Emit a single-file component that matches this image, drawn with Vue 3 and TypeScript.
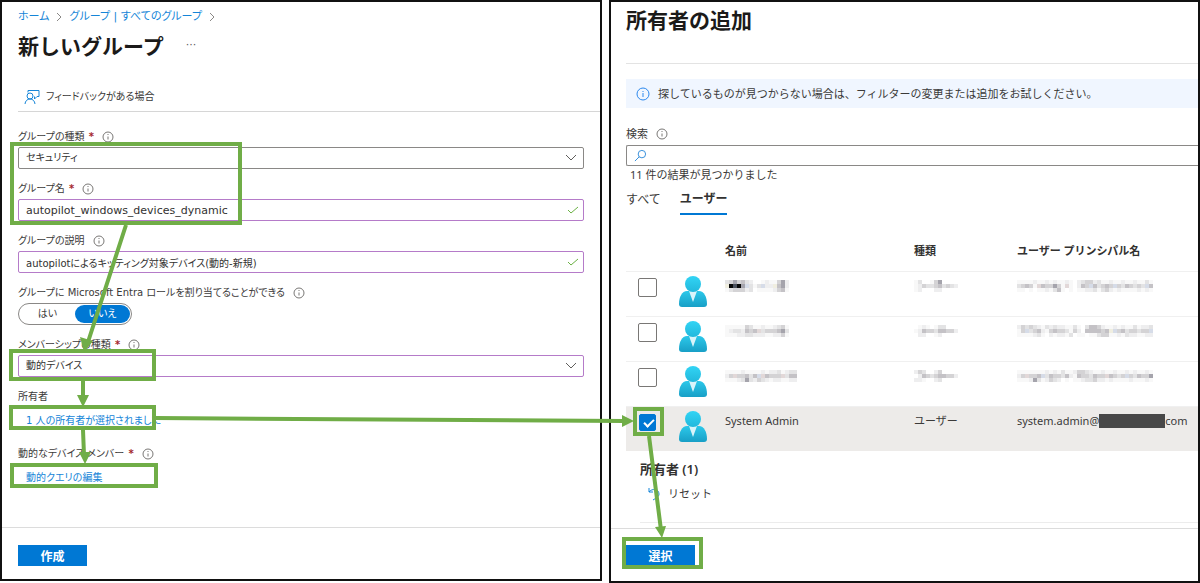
<script setup lang="ts">
interface Mosaic { width: number; rows: string[] }
interface Person { id: string; name: Mosaic; kind: Mosaic; upn: Mosaic }

const shades: Record<string, string> = {
  a: '#f8f8f8', b: '#eeeeef', c: '#e3e3e4', d: '#d4d3d5', e: '#c4c2c6', f: '#a5a4ac', k: '#080808', g: '#4a505c',
  y: '#f0eee0', p: '#e2d8d8', s: '#d6dce8',
}

const cells = (m: Mosaic) =>
  m.rows.flatMap((row, y) =>
    row.split('').map((c, x) => ({ key: `${x}-${y}`, x: x * 4, y: y * 4, fill: shades[c] ?? 'none' })),
  ).filter((c) => c.fill !== 'none')

const people: Person[] = [
  {
    id: 'p1',
    name: { width: 64, rows: ['cdfdecb..abaadfb', 'ykgkfscacsbbyefb', 'acdddbc.aaaabdea'] },
    kind: { width: 48, rows: ['ac..adf.....', 'abdccdecdcb.', 'ab...bb.....'] },
    upn: { width: 140, rows: ['aaaabaababaaba.bcddbcaabaabaabaaca.', 'cdedapeddfdapa.bedsecdedsdcedcdcse.', 'aa.a.aabacea.a.aabbcacdbabaaaababa.'] },
  },
  {
    id: 'p2',
    name: { width: 64, rows: ['aaaaadcaabaabcda', 'abccbedepcdddefc', 'aaabbccbbbaabbda'] },
    kind: { width: 48, rows: ['.aba.acc....', 'abeddceeddb.', '.bb..ab.....'] },
    upn: { width: 140, rows: ['bdcdcbacbcbbaaca.ceedbaababaacabbc.', 'adscdebadeddcadb.eeeedeysdecddcdds.', 'aaaabca.babbac.aa.aacddaabacbbaabb.'] },
  },
  {
    id: 'p3',
    name: { width: 72, rows: ['aaaabaaaababbcabcc', 'bdpddecespedddpcee', 'aaabcfcbdcbabbaabb'] },
    kind: { width: 48, rows: ['bdc..bd.....', '.bedcdeeddb.', 'bba..bc.....'] },
    upn: { width: 140, rows: ['aaaaaaababacaabddcbaabaabaababaaba.', 'bdpddesceddcebaeddceddpedcdsdceddf.', 'aaabfcabdcb.a.aabccdbbabaaaabaaaba.'] },
  },
]
</script>

<template>
  <main class="stage">
    <section class="panel group-panel">
      <div class="body">
        <nav class="crumbs">
          <a href="#">ホーム</a>
          <svg class="sep" viewBox="0 0 6 10"><path d="M1 1l4 4-4 4" /></svg>
          <a href="#">グループ | すべてのグループ</a>
          <svg class="sep" viewBox="0 0 6 10"><path d="M1 1l4 4-4 4" /></svg>
        </nav>
        <header class="title-row">
          <h1>新しいグループ</h1>
          <button class="more" aria-label="その他">···</button>
        </header>
        <button class="feedback">
          <svg viewBox="0 0 16 16"><path d="M4 3.500V1.500h11v6h-2L10.500 10V7.500" /><circle cx="6" cy="7" r="3" /><path d="M1 15c.3-3 2.200-5 5-5s4.700 2 5 5" /></svg>
          フィードバックがある場合
        </button>

        <div class="field">
          <label for="kind">グループの種類 <b>*</b><svg class="info" viewBox="0 0 12 12"><circle cx="6" cy="6" r="5" /><path d="M6 5.500v3M6 3v1" /></svg></label>
          <div class="control">
            <select id="kind"><option>セキュリティ</option></select>
            <svg class="chevron" viewBox="0 0 12 8"><path d="M1 1l5 5 5-5" /></svg>
          </div>
        </div>
        <div class="field">
          <label for="gname">グループ名 <b>*</b><svg class="info" viewBox="0 0 12 12"><circle cx="6" cy="6" r="5" /><path d="M6 5.500v3M6 3v1" /></svg></label>
          <div class="control edited">
            <input id="gname" class="latin" type="text" value="autopilot_windows_devices_dynamic" />
            <svg class="ok" viewBox="0 0 12 8"><path d="M1 4l3 3 7-6" /></svg>
          </div>
        </div>
        <div class="field">
          <label for="gdesc">グループの説明<svg class="info" viewBox="0 0 12 12"><circle cx="6" cy="6" r="5" /><path d="M6 5.500v3M6 3v1" /></svg></label>
          <div class="control edited">
            <input id="gdesc" type="text" value="autopilotによるキッティング対象デバイス(動的-新規)" />
            <svg class="ok" viewBox="0 0 12 8"><path d="M1 4l3 3 7-6" /></svg>
          </div>
        </div>
        <div class="field">
          <span class="label">グループに Microsoft Entra ロールを割り当てることができる<svg class="info" viewBox="0 0 12 12"><circle cx="6" cy="6" r="5" /><path d="M6 5.500v3M6 3v1" /></svg></span>
          <div class="toggle">
            <button>はい</button><button class="on">いいえ</button>
          </div>
        </div>
        <div class="field">
          <label for="member">メンバーシップの種類 <b>*</b><svg class="info" viewBox="0 0 12 12"><circle cx="6" cy="6" r="5" /><path d="M6 5.500v3M6 3v1" /></svg></label>
          <div class="control edited">
            <select id="member"><option>動的デバイス</option></select>
            <svg class="chevron" viewBox="0 0 12 8"><path d="M1 1l5 5 5-5" /></svg>
          </div>
        </div>
        <div class="field link-field">
          <span class="label">所有者</span>
          <a href="#">1 人の所有者が選択されました</a>
        </div>
        <div class="field link-field">
          <span class="label">動的なデバイス メンバー <b>*</b><svg class="info" viewBox="0 0 12 12"><circle cx="6" cy="6" r="5" /><path d="M6 5.500v3M6 3v1" /></svg></span>
          <a href="#">動的クエリの編集</a>
        </div>
      </div>
      <footer><button class="primary">作成</button></footer>
    </section>

    <section class="panel owner-panel">
      <div class="body">
        <h1>所有者の追加</h1>
        <div class="notice">
          <svg viewBox="0 0 14 14"><circle cx="7" cy="7" r="6" /><path d="M7 6v4M7 4v1" /></svg>
          探しているものが見つからない場合は、フィルターの変更または追加をお試しください。
        </div>
        <label class="search-label" for="search">検索<svg class="info" viewBox="0 0 12 12"><circle cx="6" cy="6" r="5" /><path d="M6 5.500v3M6 3v1" /></svg></label>
        <div class="search">
          <svg viewBox="0 0 14 14"><circle cx="8.500" cy="5.500" r="4" /><path d="M5.500 8.500L1 13" /></svg>
          <input id="search" type="text" />
        </div>
        <p class="count">11 件の結果が見つかりました</p>
        <div class="tabs">
          <button>すべて</button><button class="active">ユーザー</button>
        </div>
        <table>
          <colgroup><col class="c-check" /><col class="c-icon" /><col class="c-name" /><col class="c-kind" /><col /></colgroup>
          <thead>
            <tr><th></th><th></th><th>名前</th><th>種類</th><th>ユーザー プリンシパル名</th></tr>
          </thead>
          <tbody>
            <tr v-for="p in people" :key="p.id">
              <td><input type="checkbox" aria-label="選択" /></td>
              <td><svg class="person" viewBox="0 0 28 32"><path d="M0 28c0-7 3-13 8-13h12c5 0 8 6 8 13 0 2-1 3-3 3H3c-2 0-3-1-3-3z" fill="url(#torso)" /><path d="M10 15h8l-4 11z" fill="#d9f4fa" /><circle cx="14" cy="8" r="8" fill="url(#head)" /></svg></td>
              <td v-for="(m, i) in [p.name, p.kind, p.upn]" :key="i">
                <svg class="mosaic" :width="m.width" height="12" :viewBox="`0 0 ${m.width} 12`" shape-rendering="crispEdges">
                  <rect v-for="c in cells(m)" :key="c.key" :x="c.x" :y="c.y" width="4" height="4" :fill="c.fill" />
                </svg>
              </td>
            </tr>
            <tr class="chosen">
              <td><input type="checkbox" aria-label="System Admin" checked /></td>
              <td><svg class="person" viewBox="0 0 28 32"><path d="M0 28c0-7 3-13 8-13h12c5 0 8 6 8 13 0 2-1 3-3 3H3c-2 0-3-1-3-3z" fill="url(#torso)" /><path d="M10 15h8l-4 11z" fill="#d9f4fa" /><circle cx="14" cy="8" r="8" fill="url(#head)" /></svg></td>
              <td>System Admin</td>
              <td>ユーザー</td>
              <td><span class="upn">system.admin@<i class="redacted"></i>com</span></td>
            </tr>
          </tbody>
        </table>
        <div class="picked">
          <h2>所有者 (1)</h2>
          <button class="reset">
            <svg viewBox="0 0 12 14"><path d="M1 1v4h4M1 5c3-4 10-3 10 2 0 3-3 4-6 6" /></svg>リセット
          </button>
        </div>
      </div>
      <footer><button class="primary">選択</button></footer>
    </section>

    <svg class="marks" viewBox="0 0 1200 583" preserveAspectRatio="none">
      <defs>
        <linearGradient id="head" x1="0" y1="0" x2="0" y2="1"><stop offset="0" stop-color="#32d4f5" /><stop offset="1" stop-color="#22b8dc" /></linearGradient>
        <linearGradient id="torso" x1="0" y1="0" x2="0" y2="1"><stop offset="0" stop-color="#2cc8ea" /><stop offset="1" stop-color="#189fc6" /></linearGradient>
      </defs>
      <g class="boxes">
        <rect x="12" y="144" width="228" height="79" />
        <rect x="11" y="351" width="143" height="28" />
        <rect x="11" y="407" width="143" height="21" />
        <rect x="12" y="465" width="144" height="21" />
        <rect x="635" y="409" width="27" height="25" />
        <rect x="624" y="539" width="77" height="28" />
      </g>
      <g class="lines">
        <path d="M126 225L88 342M83 380v18M83 430l1 25M155 418l470 3M649 436l12 94" />
      </g>
      <g class="tips">
        <path d="M84 352l-4-15 13 4zM83 407l-6-12h12zM85 464l-6-12h12zM634 421l-12-6v12zM662 538l-7-11 11-1z" />
      </g>
    </svg>
  </main>
</template>

<style>
body { margin: 0; background: #fff; }
</style>

<style scoped>
* { box-sizing: border-box; }
.stage { position: relative; display: flex; align-items: flex-start; gap: 7px; min-height: 583px; color: #3b3a39; font: 12px/16px "Noto Sans CJK JP", sans-serif; }
.panel { border: 2px solid #111; display: flex; flex-direction: column; background: #fff; min-width: 0; }
.group-panel { flex: 602; min-height: 581px; font-family: "DejaVu Sans", "Noto Sans CJK JP", sans-serif; font-size: 10px; font-feature-settings: "palt"; }
.owner-panel { flex: 591; min-height: 583px; font-family: "Noto Sans", "Noto Sans CJK JP", sans-serif; font-size: 11px; }
.body { flex: 1; }
h1, h2, p { margin: 0; }
h1 { font: 700 21px/28px "Noto Sans CJK JP", sans-serif; color: #1b1a19; }
button { font: inherit; color: inherit; border: 0; background: none; padding: 0; }
a { color: #1585d8; text-decoration: none; }
svg { fill: none; flex: none; }
b { color: #a4262c; margin-left: 1px; }
.group-panel .body { padding: 6px 16px 0; }
.crumbs { display: flex; align-items: center; gap: 7px; height: 18px; font-size: 11px; }
.sep { width: 6px; height: 10px; stroke: #8a8886; }
.title-row { display: flex; align-items: center; gap: 22px; height: 38px; }
.more { color: #605e5c; font-size: 11px; }
.feedback { display: flex; align-items: center; gap: 6px; width: calc(100% + 16px); height: 30px; margin: 18px 0 15px; padding-left: 6px; border-bottom: 1px solid #d6d6d6; }
.feedback svg { width: 16px; height: 16px; stroke: #1585d8; }
.field { display: flex; flex-direction: column; margin-bottom: 10px; }
.field label, .label { display: flex; align-items: center; height: 20px; white-space: pre; }
.info { width: 12px; height: 12px; margin-left: 8px; stroke: #797775; }
.control { position: relative; display: flex; align-items: center; height: 22px; border: 1px solid #8a8886; border-radius: 2px; }
.edited { border-color: #b57bc9; }
.control input, .control select { flex: 1; width: 100%; height: 20px; border: 0; outline: 0; background: none; appearance: none; padding: 0 7px; font: inherit; font-feature-settings: inherit; color: #323130; }
.control .latin { font-size: 11px; }
.control svg { position: absolute; right: 6px; width: 12px; height: 8px; }
.control .ok { right: 4px; }
.chevron { stroke: #605e5c; }
.ok { stroke: #6bb144; }
.toggle { display: flex; width: 114px; height: 22px; padding: 1px; border: 1px solid #8a8886; border-radius: 11px; }
.toggle button { flex: 1; border-radius: 9px; }
.toggle .on { background: #0078d4; color: #fff; }
.link-field a { padding: 5px 8px 4px; line-height: 18px; }
footer { height: 53px; border-top: 1px solid #dcdcdc; padding: 16px 15px; }
.group-panel footer { height: 52px; padding: 17px 16px; }
.primary { display: block; width: 69px; height: 21px; background: #0078d4; color: #fff; font: 700 12px/20px "Noto Sans CJK JP", sans-serif; }
.owner-panel .body { padding: 3px 0 0 15px; }
.notice { position: relative; display: flex; align-items: center; gap: 8px; height: 29px; margin-top: 15px; padding-left: 10px; background: #f0f6ff; white-space: nowrap; }
.owner-panel h1 { padding-bottom: 30px; border-bottom: 1px solid #e3e3e3; }
.notice svg { width: 14px; height: 14px; stroke: #2b88ee; }
.search-label { display: flex; align-items: center; height: 18px; margin: 17px 0 2px; }
.search { display: flex; align-items: center; height: 21px; padding-left: 7px; border: 1px solid #8a8886; border-right: 0; border-radius: 2px 0 0 2px; }
.search svg { width: 13px; height: 13px; stroke: #2b88d8; }
.search input { flex: 1; border: 0; outline: 0; background: none; }
.count { padding-left: 4px; line-height: 18px; }
.tabs { display: flex; gap: 19px; height: 31px; font-size: 12px; }
.tabs .active { font-weight: 700; border-bottom: 2px solid #0078d4; color: #323130; }
table { width: 100%; table-layout: fixed; border-collapse: collapse; margin-top: 17px; }
.c-check { width: 53px; } .c-icon { width: 46px; } .c-name { width: 189px; } .c-kind { width: 103px; }
th { text-align: left; height: 39px; padding: 0; color: #323130; }
td { height: 45px; padding: 0; vertical-align: top; border-top: 1px solid #f0f0f0; line-height: 28px; }
td input { display: block; appearance: none; width: 19px; height: 19px; margin: 6px 0 0 12px; border: 1px solid #797775; border-radius: 2px; background: #fff; }
td input:checked { width: 17px; height: 17px; margin: 7px 0 0 13px; border-color: #0078d4; background: #0078d4; }
td input:checked::after { content: ""; display: block; width: 8px; height: 4px; margin: 4px 0 0 4px; border: solid #fff; border-width: 0 0 2px 2px; transform: rotate(-45deg); }
.person { display: block; width: 28px; height: 32px; margin-top: 4px; }
.mosaic { display: block; margin-top: 8px; }
.chosen { background: #edebe9; }
.upn { display: flex; align-items: center; white-space: nowrap; }
.redacted { width: 66px; height: 14px; background: #484848; }
.picked { padding-left: 14px; margin-top: 8px; }
h2 { font-size: 13px; line-height: 20px; font-weight: 600; color: #323130; }
.reset { display: flex; align-items: center; gap: 8px; width: 100%; height: 44px; padding: 5px 0 18px 8px; border-bottom: 1px solid #ececec; }
.reset svg { width: 12px; height: 14px; stroke: #1585d8; }
.marks { position: absolute; inset: 0; width: 100%; height: 100%; pointer-events: none; }
.boxes rect, .lines path { stroke: #70ad47; stroke-width: 4px; }
.tips { fill: #70ad47; }
</style>
